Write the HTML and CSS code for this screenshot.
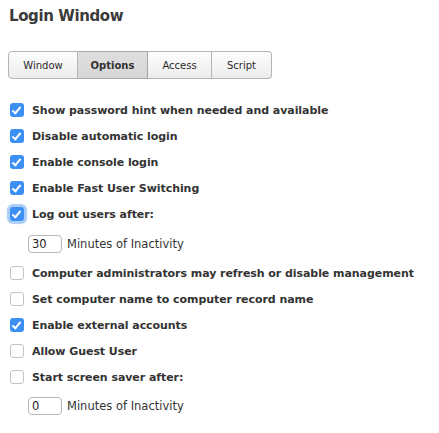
FILE: index.html
```html
<!DOCTYPE html>
<html>
<head>
<meta charset="utf-8">
<link rel="stylesheet" href="styles.css">
</head>
<body>
<div class="panel">
  <h1 class="title">Login Window</h1>
  <div class="tabs">
    <div class="tab tab-window">Window</div>
    <div class="tab tab-options selected">Options</div>
    <div class="tab tab-access">Access</div>
    <div class="tab tab-script">Script</div>
  </div>
  <div class="options">
    <div class="row"><span class="cb checked"></span><span class="label">Show password hint when needed and available</span></div>
    <div class="row"><span class="cb checked"></span><span class="label">Disable automatic login</span></div>
    <div class="row"><span class="cb checked"></span><span class="label">Enable console login</span></div>
    <div class="row"><span class="cb checked"></span><span class="label">Enable Fast User Switching</span></div>
    <div class="row"><span class="cb checked focus"></span><span class="label">Log out users after:</span></div>
    <div class="row sub sub1"><span class="field">30</span><span class="sublabel">Minutes of Inactivity</span></div>
    <div class="row"><span class="cb"></span><span class="label">Computer administrators may refresh or disable management</span></div>
    <div class="row"><span class="cb"></span><span class="label">Set computer name to computer record name</span></div>
    <div class="row"><span class="cb checked"></span><span class="label">Enable external accounts</span></div>
    <div class="row"><span class="cb"></span><span class="label">Allow Guest User</span></div>
    <div class="row"><span class="cb"></span><span class="label">Start screen saver after:</span></div>
    <div class="row sub sub2"><span class="field">0</span><span class="sublabel">Minutes of Inactivity</span></div>
  </div>
</div>
</body>
</html>
```
FILE: styles.css
```css
html, body {
  margin: 0;
  padding: 0;
  background: #ffffff;
}
body {
  font-family: "DejaVu Sans", "Liberation Sans", sans-serif;
  color: #333333;
  width: 439px;
  height: 433px;
  overflow: hidden;
}
.panel {
  padding: 6px 0 0 8px;
}
.title {
  margin: 0 0 0 1px;
  font-size: 15px;
  line-height: 20px;
  font-weight: bold;
  letter-spacing: -0.4px;
  color: #3b3b3b;
}
.tabs {
  display: flex;
  margin-top: 25px;
  height: 28px;
}
.tab {
  box-sizing: border-box;
  height: 28px;
  display: flex;
  align-items: center;
  justify-content: center;
  font-size: 10px;
  color: #2a2a2a;
  background: linear-gradient(#fdfdfd, #ececec);
  border: 1px solid #b4b4b4;
  border-left: none;
}
.tab-window { width: 70px; border-left: 1px solid #b4b4b4; border-radius: 4px 0 0 4px; }
.tab-options { width: 70px; }
.tab-access { width: 64px; }
.tab-script { width: 60px; border-radius: 0 4px 4px 0; }
.tab.selected {
  background: linear-gradient(#dedede, #d6d6d6);
  border-color: #a6a6a6;
  font-weight: bold;
  color: #333;
}
.options {
  margin-top: 18px;
  display: flex;
  flex-direction: column;
}
.row {
  height: 26px;
  display: flex;
  align-items: center;
}
.cb {
  box-sizing: border-box;
  width: 14px;
  height: 14px;
  margin-left: 2px;
  margin-right: 8px;
  border-radius: 3px;
  border: 1px solid #c2c2c2;
  background: #fff;
  flex: none;
  position: relative;
}
.cb.checked {
  border: none;
  background: #3c8ff3;
}
.cb.checked::after {
  content: "";
  position: absolute;
  left: 4px;
  top: 2px;
  width: 3px;
  height: 7px;
  border: solid #fff;
  border-width: 0 2px 2px 0;
  transform: rotate(40deg);
}
.cb.focus {
  box-shadow: 0 0 1px 3px #a9cdf8;
}
.label {
  font-size: 11px;
  font-weight: bold;
  letter-spacing: -0.06px;
  white-space: nowrap;
}
.sub {
  padding-left: 20px;
}
.sub1 {
  height: 33px;
}
.sub2 {
  height: 32px;
}
.field {
  box-sizing: border-box;
  width: 34px;
  height: 18px;
  border: 1px solid #b8b8b8;
  border-radius: 4px;
  font-size: 11.5px;
  line-height: 16px;
  padding-left: 3px;
  color: #222;
  margin-right: 5px;
}
.sublabel {
  font-size: 11.5px;
  color: #333;
}
```
